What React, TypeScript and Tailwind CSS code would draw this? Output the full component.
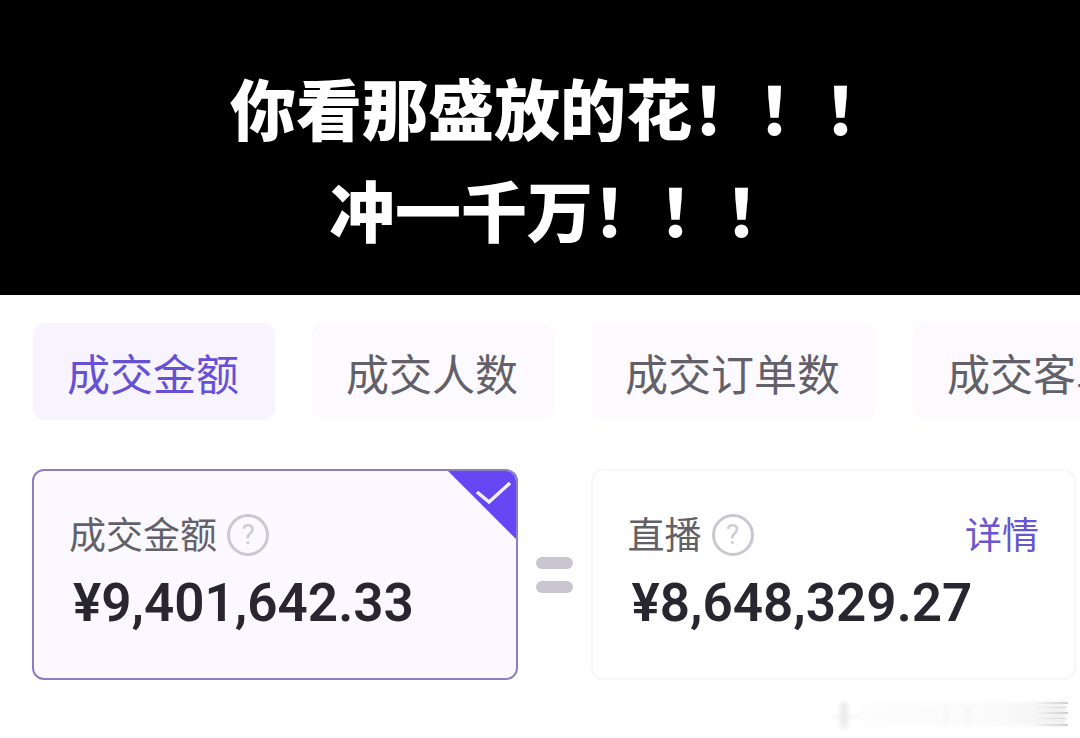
import React, { useState } from "react";

const tabs = ["成交金额", "成交人数", "成交订单数", "成交客单价"];

const HelpButton: React.FC<{ label: string }> = ({ label }) => (
  <button
    aria-label={`${label}说明`}
    className="flex items-center justify-center w-[42px] h-[42px] rounded-full border-3 border-[#cbc7d1] text-[28px] leading-none font-[Roboto,sans-serif] text-[#cdcad3]"
  >
    ?
  </button>
);

const EqualSign: React.FC = () => (
  <div className="shrink-0 flex flex-col gap-3" aria-hidden="true">
    <span className="w-[37px] h-3 rounded-full bg-[#c8c5d0]"></span>
    <span className="w-[37px] h-3 rounded-full bg-[#c8c5d0]"></span>
  </div>
);

// Triangle with a tick in the corner of the selected card
const SelectedCorner: React.FC = () => (
  <svg
    className="absolute top-0 right-0 w-[68px] h-[68px]"
    viewBox="0 0 68 68"
    aria-hidden="true"
  >
    <path d="M0 0H68V68Z" fill="#6548f4" />
    <path
      d="M29 21L41 31L62 12"
      fill="none"
      stroke="#f3effe"
      strokeWidth="3.5"
    />
  </svg>
);

type MetricCardProps = {
  title: string;
  value: string;
  selected?: boolean;
  detail?: boolean;
};

const MetricCard: React.FC<MetricCardProps> = ({
  title,
  value,
  selected,
  detail,
}) => (
  <article
    className={`relative flex-1 overflow-hidden rounded-xl border-2 px-[35px] pt-[40px] pb-[45px] ${
      selected ? "border-[#8e7dc2] bg-[#fbf8ff]" : "border-[#f8f6f9] bg-white"
    }`}
  >
    {selected && <SelectedCorner />}
    <div className="flex items-center gap-[10px] h-[48px]">
      <h2 className="pb-1 text-[37px] leading-[44px] text-[#626068]">
        {title}
      </h2>
      <HelpButton label={title} />
      {detail && (
        <a
          href="#detail"
          className="ml-auto pb-1 text-[37px] leading-[44px] text-[#6b55cf]"
        >
          详情
        </a>
      )}
    </div>
    <p className="mt-[14px] pl-1 text-[53px] leading-[60px] font-semibold font-[Roboto,sans-serif] text-[#28262f]">
      {value}
    </p>
  </article>
);

const Watermark: React.FC = () => (
  <svg
    className="ml-auto w-[250px] h-[38px]"
    viewBox="0 0 250 38"
    aria-hidden="true"
  >
    <defs>
      <linearGradient id="wmBody">
        <stop offset="0" stopColor="#fdfdfd" />
        <stop offset="0.7" stopColor="#fafafa" />
        <stop offset="1" stopColor="#f0f0f0" />
      </linearGradient>
      <linearGradient id="wmLine">
        <stop offset="0" stopColor="#f8f8f8" />
        <stop offset="1" stopColor="#cfcfcf" />
      </linearGradient>
      <filter id="wmSoft">
        <feGaussianBlur stdDeviation="2" />
      </filter>
    </defs>
    <g filter="url(#wmSoft)">
      <path d="M14 8h8v26h-8zM6 22h28v2H6z" fill="#ececec" />
      <path d="M34 8h206v24H34z" fill="url(#wmBody)" />
      <path d="M118 12h4v20h-4zM140 12h4v20h-4z" fill="#f6f6f6" />
    </g>
    <path
      d="M206 8h36v2h-36zM206 13h34v1h-34zM206 18h36v2h-36zM206 24h34v1h-34zM206 30h36v2h-36z"
      fill="url(#wmLine)"
    />
  </svg>
);

const App: React.FC = () => {
  const [activeTab, setActiveTab] = useState<number>(0);

  return (
    <main className="w-full overflow-hidden bg-white font-['Noto_Sans_CJK_SC',sans-serif]">
      <header className="bg-black pt-[55px] pb-[36px] pl-10">
        <h1 className="text-center text-[66px] leading-[102px] font-black text-white">
          你看那盛放的花！！！
          <br />
          冲一千万！！！
        </h1>
      </header>

      <nav className="flex gap-[37px] pl-[33px] pt-7">
        {tabs.map((tab, index) => (
          <button
            key={tab}
            onClick={() => setActiveTab(index)}
            className={`shrink-0 h-[97px] pl-[34px] pr-[36px] rounded-xl whitespace-nowrap text-[43px] leading-[60px] ${
              activeTab === index
                ? "bg-[#f7f3ff] text-[#6550d6]"
                : "bg-[#fcfafe] text-[#626068]"
            }`}
          >
            {tab}
          </button>
        ))}
      </nav>

      <section className="flex items-center gap-[18px] pl-8 pr-1 mt-[49px]">
        <MetricCard title="成交金额" value="¥9,401,642.33" selected />
        <EqualSign />
        <MetricCard title="直播" value="¥8,648,329.27" detail />
      </section>

      <footer className="pt-[14px] pr-1">
        <Watermark />
      </footer>
    </main>
  );
};

export default App;
